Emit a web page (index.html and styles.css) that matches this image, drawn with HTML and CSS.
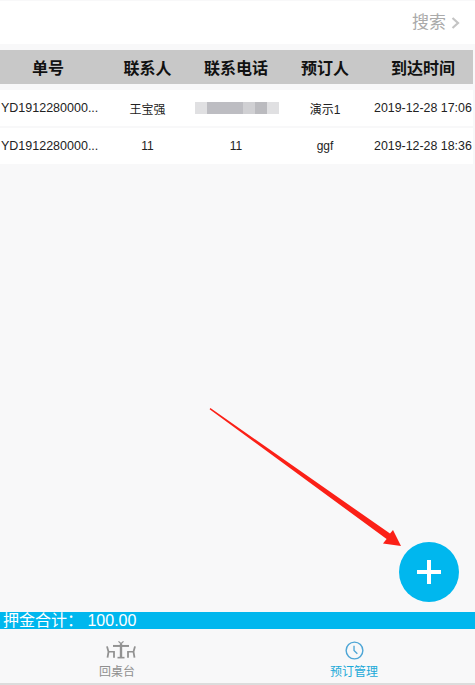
FILE: index.html
```html
<!DOCTYPE html>
<html lang="en">
<head>
    <meta charset="utf-8" />
    <meta name="viewport" content="width=device-width, initial-scale=1" />
    <title>预订管理</title>
    <link rel="stylesheet" href="styles.css">
</head>
<body>
    <div class="page">
        <div class="search-bar">
            <span class="search-label">搜索</span>
            <svg class="search-arrow" width="9" height="12" viewBox="0 0 9 12">
                <path d="M1.5 1 L7 6 L1.5 11" fill="none" stroke="#c4c4c4" stroke-width="2.2" />
            </svg>
        </div>

        <div class="table-row table-head">
            <div>单号</div>
            <div>联系人</div>
            <div>联系电话</div>
            <div>预订人</div>
            <div>到达时间</div>
        </div>

        <div class="table-row table-item first-item">
            <div class="order-no">YD1912280000...</div>
            <div>王宝强</div>
            <div>
                <div class="blurred-phone">
                    <span class="blur-a"></span>
                    <span class="blur-b"></span>
                    <span class="blur-c"></span>
                    <span class="blur-d"></span>
                    <span class="blur-a"></span>
                </div>
            </div>
            <div>演示1</div>
            <div class="arrive-time">2019-12-28 17:06</div>
        </div>

        <div class="table-row table-item">
            <div class="order-no">YD1912280000...</div>
            <div>11</div>
            <div>11</div>
            <div>ggf</div>
            <div class="arrive-time">2019-12-28 18:36</div>
        </div>

        <div class="spacer"></div>

        <div class="deposit-bar">押金合计： 100.00</div>

        <div class="tabs">
            <div class="tab">
                <svg class="tab-icon table-icon" width="30" height="18" viewBox="0 0 30 20" preserveAspectRatio="none">
                    <g fill="none" stroke="#929292" stroke-width="1.8">
                        <path d="M12.5 0.5 L15 3 L17.5 0.5" stroke-width="1.2" />
                        <path d="M7 5.5 H23" stroke-width="2.2" />
                        <path d="M15 3 V18" stroke-width="2.4" />
                        <path d="M11.5 18.5 H18.5" />
                        <path d="M1 6 L2.5 12 L1.5 18.5" />
                        <path d="M2.5 12 H8 V18.5" />
                        <path d="M29 6 L27.5 12 L28.5 18.5" />
                        <path d="M27.5 12 H22 V18.5" />
                    </g>
                </svg>
                <span class="tab-label">回桌台</span>
            </div>
            <div class="tab tab-active">
                <svg class="tab-icon clock-icon" width="19" height="19" viewBox="0 0 20 20">
                    <circle cx="10" cy="10" r="8.8" fill="none" stroke="#4ea6d6" stroke-width="1.5" />
                    <path d="M9.5 5 V10 L13 13.5" fill="none" stroke="#4ea6d6" stroke-width="1.4" />
                </svg>
                <span>预订管理</span>
            </div>
        </div>

        <div class="add-button">
            <svg width="24" height="24" viewBox="0 0 24 24">
                <path d="M12 0 V24 M0 12 H24" stroke="#fff" stroke-width="4" />
            </svg>
        </div>

        <!-- red annotation arrow drawn on top of the screenshot -->
        <svg class="annotation" width="475" height="685" viewBox="0 0 475 685">
            <polygon points="210.4,408 390,533.6 393,530 401,546 383,543.5 386.6,539 209.6,409.2" fill="#fb2017" />
        </svg>
    </div>
</body>
</html>
```

FILE: styles.css
```css
body {
    margin: 0;
    font-family: "Liberation Sans", "Noto Sans CJK SC", sans-serif;
    background: #f8f8f9;
}

.page {
    position: relative;
    width: 475px;
    height: 685px;
    overflow: hidden;
    display: flex;
    flex-direction: column;
}

.search-bar {
    height: 43px;
    margin-top: 1px;
    background: #fff;
    display: flex;
    align-items: center;
    justify-content: flex-end;
    padding-right: 15px;
    gap: 5px;
}

.search-label {
    font-size: 17px;
    color: #aaa;
    margin-bottom: 4px;
}

.table-row {
    display: grid;
    grid-template-columns: 96px 100px 80px 98px 98px;
    width: 473px;
    text-align: center;
    align-items: center;
}

.table-row > :nth-child(2) {
    padding-left: 3px;
}

.table-head {
    height: 34px;
    margin-top: 6px;
    background: #c8c8c8;
    font-size: 16px;
    font-weight: bold;
    color: #111;
}

.table-item {
    height: 36px;
    margin-top: 2px;
    background: #fff;
    font-size: 12px;
    color: #222;
}

.first-item {
    margin-top: 6px;
}

.order-no {
    text-align: left;
    padding-left: 1px;
    font-size: 12.5px;
    white-space: nowrap;
}

.arrive-time {
    text-align: right;
    padding-right: 2px;
    font-size: 12.4px;
    white-space: nowrap;
}

.blurred-phone {
    display: flex;
    width: 84px;
    height: 12px;
    margin-left: -1px;
    filter: blur(0.6px);
}

.blurred-phone span {
    display: block;
}

.blur-a {
    width: 12px;
    background: #e0e0e2;
}

.blur-b {
    width: 36px;
    background: #bdbdc2;
}

.blur-c {
    width: 12px;
    background: #d0d0d3;
}

.blur-d {
    width: 12px;
    background: #bbbbbf;
}

.spacer {
    flex: 1;
}

.deposit-bar {
    height: 17px;
    line-height: 18px;
    background: #00b7ee;
    color: #fff;
    font-size: 16px;
    padding-left: 3px;
    white-space: pre;
    overflow: hidden;
}

.tabs {
    height: 54px;
    border-bottom: 2px solid #dcdcdc;
    padding-right: 3px;
    display: flex;
}

.tab {
    flex: 1;
    display: flex;
    flex-direction: column;
    align-items: center;
    padding-top: 12px;
    font-size: 12px;
    line-height: 17px;
    color: #8f8f8f;
}

.tab-icon {
    display: block;
    margin-bottom: 5px;
}

.clock-icon {
    margin-bottom: 4px;
}

.table-icon {
    margin-left: 6px;
}

.tab-label {
    margin-right: 2px;
}

.tab-active {
    color: #1aa9d8;
}

.add-button {
    position: absolute;
    left: 399px;
    top: 542px;
    width: 60px;
    height: 60px;
    border-radius: 50%;
    background: #00b7ee;
    display: flex;
    align-items: center;
    justify-content: center;
}

.annotation {
    position: absolute;
    left: 0;
    top: 0;
}
```
